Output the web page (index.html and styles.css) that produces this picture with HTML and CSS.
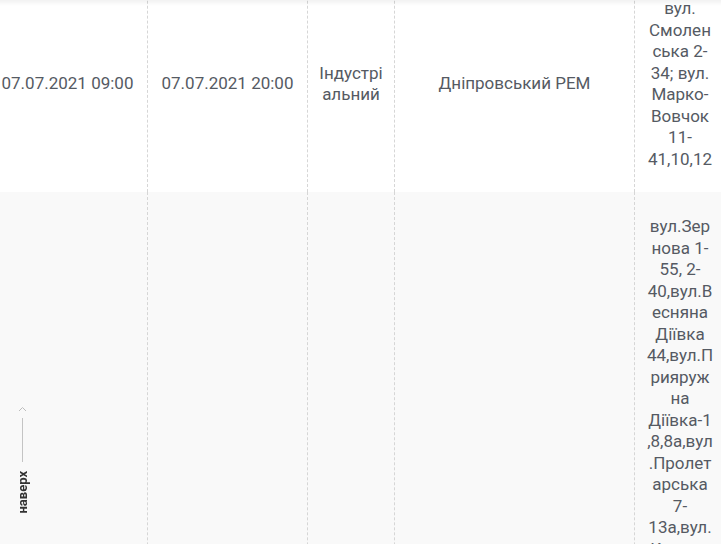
FILE: index.html
```
<!DOCTYPE html>
<html lang="uk">
<head>
    <meta charset="UTF-8">
    <meta name="viewport" content="width=device-width, initial-scale=1.0">
    <title>Графік відключень</title>
    <link rel="stylesheet" href="styles.css">
</head>
<body>
    <!-- Top shadow from the sticky header -->
    <div class="header-shadow"></div>

    <!-- Outages table -->
    <div class="table-wrap">
        <table class="outages">
            <colgroup>
                <col class="col-start">
                <col class="col-end">
                <col class="col-district">
                <col class="col-rem">
                <col class="col-address">
            </colgroup>
            <tbody>
                <tr>
                    <td>07.07.2021 09:00</td>
                    <td>07.07.2021 20:00</td>
                    <td class="district">Індустріальний</td>
                    <td>Дніпровський РЕМ</td>
                    <td class="address">вул. Смоленська 2-34; вул. Марко-Вовчок 11-41,10,12</td>
                </tr>
                <tr class="row-alt">
                    <td>07.07.2021 09:00</td>
                    <td>07.07.2021 18:00</td>
                    <td class="district">Індустріальний</td>
                    <td>Дніпровський РЕМ</td>
                    <td class="address">вул.Зернова 1-55, 2-40,вул.Весняна Діївка 44,вул.Прияружна Діївка-1,8,8а,вул.Пролетарська 7-13а,вул.Калинова 2-48,вул.Ударників 1-33,вул.Новоселівська 5-27,вул.Широка 10-42,вул.Шевченка 3-19,вул.Садова 1-12,вул.Лісова 4-36,вул.Квіткова 1-15,вул.Озерна 2-22,вул.Польова 1-9,вул.Вишнева 3-17</td>
                </tr>
            </tbody>
        </table>
    </div>

    <!-- Back to top -->
    <a href="#" class="to-top">
        <svg class="to-top-arrow" width="9" height="6" viewBox="0 0 9 6">
            <polyline points="1,5 4.5,1.5 8,5" fill="none" stroke="#bdbdbd" stroke-width="1"/>
        </svg>
        <span class="to-top-line"></span>
        <span class="to-top-text">наверх</span>
    </a>
</body>
</html>
```
FILE: styles.css
```
* {
    margin: 0;
    padding: 0;
    box-sizing: border-box;
}

body {
    background-color: #fff;
    color: #555a63;
    font-family: Roboto, "Liberation Sans", sans-serif;
    overflow: hidden;
}

.header-shadow {
    position: fixed;
    top: 0;
    left: 0;
    right: 0;
    height: 6px;
    background: linear-gradient(rgba(0, 0, 0, 0.05), rgba(0, 0, 0, 0));
    z-index: 5;
}

.table-wrap {
    margin: -24px 0 0 -13px;
}

.outages {
    border-collapse: collapse;
    table-layout: fixed;
    width: 750px;
    font-size: 17px;
    line-height: 21.5px;
}

.col-start { width: 160px; }
.col-end { width: 160px; }
.col-district { width: 87px; }
.col-rem { width: 240px; }
.col-address { width: 103px; }

.outages td {
    padding: 22px 10px;
    text-align: center;
    vertical-align: middle;
    border-left: 1px dashed #d6d6d6;
    border-right: 1px dashed #d6d6d6;
    overflow-wrap: break-word;
}

.outages td.address {
    padding-left: 11.75px;
    padding-right: 23.75px;
}

.outages tr.row-alt td {
    padding-top: 24px;
}

.row-alt {
    background-color: #f9f9f9;
}

/* Back to top link */
.to-top {
    position: fixed;
    left: 14px;
    top: 406px;
    width: 16px;
    display: flex;
    flex-direction: column;
    align-items: center;
    text-decoration: none;
}

.to-top-arrow {
    display: block;
}

.to-top-line {
    width: 1px;
    height: 44px;
    margin-top: 6px;
    background-color: #c4c4c4;
}

.to-top-text {
    margin-top: 9px;
    writing-mode: vertical-rl;
    transform: rotate(180deg);
    font-size: 13px;
    font-weight: 700;
    color: #333;
}
```
